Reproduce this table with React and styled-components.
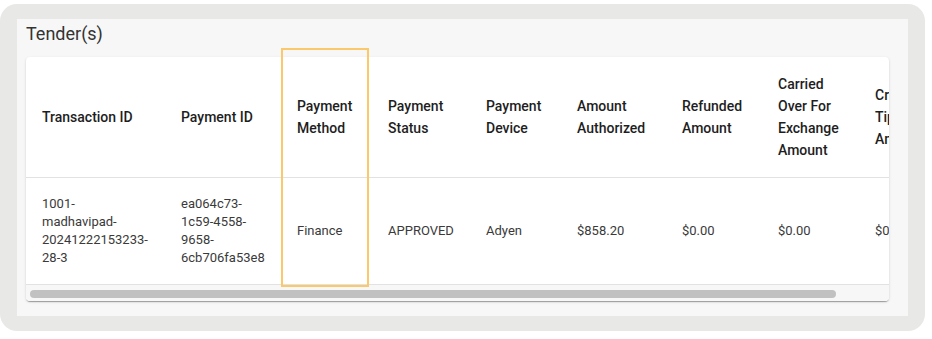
import React from 'react';
import styled, { createGlobalStyle } from 'styled-components';

const GlobalStyle = createGlobalStyle`
  html, body {
    margin: 0;
    padding: 0;
    background: #ffffff;
    font-family: Roboto, "Liberation Sans", Arial, sans-serif;
  }
`;

const Frame = styled.div`
  box-sizing: border-box;
  width: 925px;
  height: 327px;
  margin-top: 4px;
  padding: 15px 17px;
  background: #e8e8e7;
  border-radius: 17px;
`;

const Panel = styled.section`
  position: relative;
  box-sizing: border-box;
  height: 100%;
  padding: 3px 19px 0 9px;
  background: #f7f7f7;
`;

const Title = styled.h2`
  margin: 0 0 11px;
  font-size: 18px;
  line-height: 24px;
  font-weight: 400;
  color: #333333;
`;

const Card = styled.div`
  background: #ffffff;
  border-radius: 4px;
  overflow: hidden;
  box-shadow: 0 2px 1px -1px rgba(0, 0, 0, 0.2), 0 1px 1px 0 rgba(0, 0, 0, 0.14),
    0 1px 3px 0 rgba(0, 0, 0, 0.12);
`;

const Viewport = styled.div`
  overflow: hidden;
`;

const ScrollTrack = styled.div`
  box-sizing: border-box;
  height: 16px;
  padding: 5px 4px 3px;
  background: #f7f7f7;
`;

const ScrollThumb = styled.div`
  height: 8px;
  border-radius: 4px;
  background: #c1c1c1;
`;

const Table = styled.table`
  table-layout: fixed;
  width: 916px;
  border-collapse: collapse;
`;

const HeadCell = styled.th`
  padding: 16px;
  font-size: 14px;
  line-height: 22px;
  font-weight: 500;
  color: #1e1e1e;
  text-align: left;
  vertical-align: middle;
  border-bottom: 1px solid #e2e2e2;
`;

const Cell = styled.td`
  padding: 17px 16px;
  font-size: 13px;
  line-height: 18px;
  font-weight: 400;
  color: #3a3a3a;
  vertical-align: middle;
  border-bottom: 1px solid #e2e2e2;
`;

const Highlight = styled.div`
  position: absolute;
  left: 264px;
  top: 29px;
  width: 88px;
  height: 239px;
  box-sizing: border-box;
  border: 2px solid #fbc96b;
  pointer-events: none;
`;

const columns = [
  { title: 'Transaction ID', width: 139, value: '1001-madhavipad-20241222153233-28-3' },
  { title: 'Payment ID', width: 116, value: 'ea064c73-1c59-4558-9658-6cb706fa53e8' },
  { title: 'Payment Method', width: 91, value: 'Finance' },
  { title: 'Payment Status', width: 98, value: 'APPROVED' },
  { title: 'Payment Device', width: 91, value: 'Adyen' },
  { title: 'Amount Authorized', width: 105, value: '$858.20' },
  { title: 'Refunded Amount', width: 96, value: '$0.00' },
  { title: 'Carried Over For Exchange Amount', width: 97, value: '$0.00' },
  { title: 'Credit Tip Amount', width: 83, value: '$0.00' },
];

const VIEW_WIDTH = 863;
const tableWidth = columns.reduce((sum, c) => sum + c.width, 0);
const thumbPercent = (VIEW_WIDTH / tableWidth) * 100;

// allow a line break after every hyphen, digits included
const breakable = (text) =>
  text.split('-').map((part, i, all) => (
    <React.Fragment key={i}>
      {part}
      {i < all.length - 1 && (
        <>
          -<wbr />
        </>
      )}
    </React.Fragment>
  ));

const App = () => (
  <>
    <GlobalStyle />
    <Frame>
      <Panel>
        <Title>Tender(s)</Title>
        <Card>
          <Viewport>
            <Table>
              <colgroup>
                {columns.map((c) => (
                  <col key={c.title} style={{ width: c.width }} />
                ))}
              </colgroup>
              <thead>
                <tr>
                  {columns.map((c) => (
                    <HeadCell key={c.title}>{c.title}</HeadCell>
                  ))}
                </tr>
              </thead>
              <tbody>
                <tr>
                  {columns.map((c) => (
                    <Cell key={c.title}>{breakable(c.value)}</Cell>
                  ))}
                </tr>
              </tbody>
            </Table>
          </Viewport>
          <ScrollTrack>
            <ScrollThumb style={{ width: `${thumbPercent}%` }} />
          </ScrollTrack>
        </Card>
        <Highlight />
      </Panel>
    </Frame>
  </>
);

export default App;
